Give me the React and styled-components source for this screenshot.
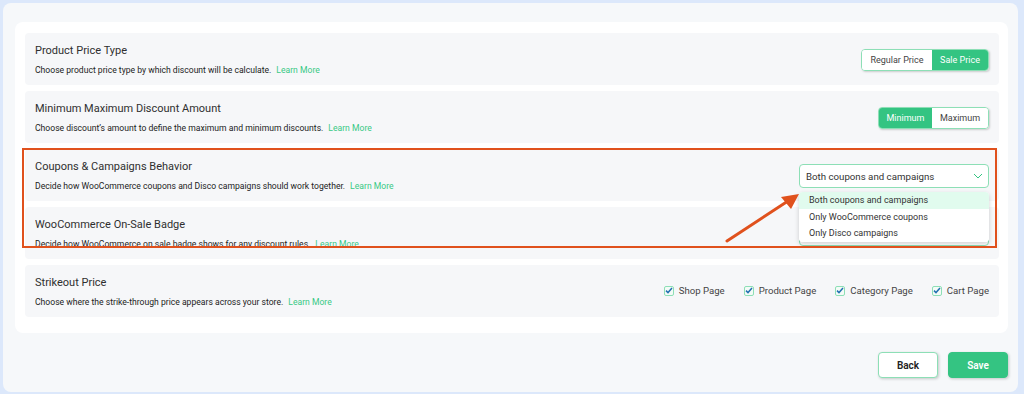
import React from "react";
import styled, { createGlobalStyle } from "styled-components";

const GREEN = "#34c482";
const SOFT_GREEN = "#8ddfb6";
const ORANGE = "#e0511d";

const GlobalStyle = createGlobalStyle`
  html, body {
    margin: 0;
    padding: 0;
    background: #dce8fb;
    font-family: Roboto, "Noto Sans", "Liberation Sans", sans-serif;
    color: #2b2b2b;
  }
  * { box-sizing: border-box; }
`;

const Page = styled.div`
  padding: 3px 6px 2px 3px;
  height: 394px;
`;

const Panel = styled.div`
  background: #f6f8fa;
  border-radius: 8px;
  height: 389px;
  padding: 19px 10px 14px 12px;
  display: flex;
  flex-direction: column;
`;

const Card = styled.div`
  background: #ffffff;
  border-radius: 8px;
  height: 311px;
  padding: 11px 9px 0 10px;
  display: flex;
  flex-direction: column;
  gap: 6px;
`;

const Row = styled.div`
  background: #f6f7f9;
  border-radius: 4px;
  height: 52px;
  padding: 11px 10px 0 10px;
  display: flex;
  justify-content: space-between;
  align-items: flex-start;
`;

const Info = styled.div`
  display: flex;
  flex-direction: column;
  gap: 6px;
  max-height: ${(p) => (p.$clip ? `${p.$clip}px` : "none")};
  overflow: hidden;
`;

const Title = styled.div`
  font-size: 11px;
  line-height: 14px;
  color: #2f2f2f;
`;

const Desc = styled.div`
  font-size: 8.6px;
  line-height: 12px;
  color: #222;
`;

const Learn = styled.a`
  color: #39c985;
  margin-left: 5px;
  cursor: pointer;
`;

const Toggle = styled.div`
  display: flex;
  margin-top: 5px;
  border: 1px solid ${SOFT_GREEN};
  border-radius: 4px;
  overflow: hidden;
  box-shadow: 1px 1px 2px rgba(0, 0, 0, 0.18);
  height: 22px;
`;

const ToggleOption = styled.div`
  display: flex;
  align-items: center;
  justify-content: center;
  width: ${(p) => p.$w}px;
  font-size: 9px;
  background: ${(p) => (p.$active ? GREEN : "#fff")};
  color: ${(p) => (p.$active ? "#fff" : "#444")};
`;

const Callout = styled.div`
  position: relative;
  display: flex;
  flex-direction: column;
  gap: 6px;
`;

const Frame = styled.div`
  position: absolute;
  top: -1px;
  left: -3px;
  right: 2px;
  height: 100px;
  border: 2px solid ${ORANGE};
  pointer-events: none;
  z-index: 3;
`;

const SelectWrap = styled.div`
  position: relative;
  margin-top: 4px;
`;

const Select = styled.div`
  width: 190px;
  height: 24px;
  border: 1px solid ${SOFT_GREEN};
  border-radius: 4px;
  background: #fff;
  display: flex;
  align-items: center;
  justify-content: space-between;
  padding: 0 5px 0 6px;
  font-size: 9.7px;
  color: #333;
`;

const Menu = styled.div`
  position: absolute;
  top: 28px;
  left: 0;
  width: 190px;
  background: #fff;
  border-radius: 4px;
  box-shadow: 0 2px 5px rgba(0, 0, 0, 0.18);
  z-index: 2;
  overflow: hidden;
`;

const MenuItem = styled.div`
  height: 16.6px;
  display: flex;
  align-items: center;
  padding-left: 10px;
  font-size: 9px;
  color: #333;
  background: ${(p) => (p.$active ? "#e1fbee" : "#fff")};
`;

const Arrow = styled.svg`
  position: absolute;
  left: 690px;
  top: 40px;
  z-index: 3;
  pointer-events: none;
`;

const Checks = styled.div`
  display: flex;
  gap: 19px;
  margin-top: 9px;
`;

const Check = styled.label`
  display: flex;
  align-items: center;
  gap: 5px;
  font-size: 9.6px;
  color: #444;
`;

const Box = styled.span`
  width: 10px;
  height: 10px;
  border: 1px solid ${SOFT_GREEN};
  border-radius: 2px;
  background: #f3fbf7;
  display: flex;
  align-items: center;
  justify-content: center;
`;

const Footer = styled.div`
  margin-top: 19px;
  display: flex;
  justify-content: flex-end;
  gap: 10px;
`;

const Button = styled.button`
  width: 60px;
  height: 26px;
  border-radius: 4px;
  font-family: inherit;
  font-size: 10px;
  font-weight: 600;
  cursor: pointer;
  border: 1px solid ${(p) => (p.$primary ? GREEN : SOFT_GREEN)};
  background: ${(p) => (p.$primary ? GREEN : "#fff")};
  color: ${(p) => (p.$primary ? "#fff" : "#222")};
  box-shadow: 1px 1px 3px rgba(0, 0, 0, 0.2);
`;

const Chevron = () => (
  <svg width="10" height="6" viewBox="0 0 10 6">
    <path d="M1 1l4 4 4-4" fill="none" stroke={GREEN} strokeWidth="1" />
  </svg>
);

const Tick = () => (
  <svg width="8" height="7" viewBox="0 0 8 7">
    <path d="M1 3.6l2 2L7 1" fill="none" stroke="#2271b1" strokeWidth="1.5" />
  </svg>
);

const pages = ["Shop Page", "Product Page", "Category Page", "Cart Page"];

const App = () => (
  <>
    <GlobalStyle />
    <Page>
      <Panel>
        <Card>
          <Row>
            <Info>
              <Title>Product Price Type</Title>
              <Desc>
                Choose product price type by which discount will be calculate.
                <Learn>Learn More</Learn>
              </Desc>
            </Info>
            <Toggle>
              <ToggleOption $w={70}>Regular Price</ToggleOption>
              <ToggleOption $w={56} $active>Sale Price</ToggleOption>
            </Toggle>
          </Row>
          <Row>
            <Info>
              <Title>Minimum Maximum Discount Amount</Title>
              <Desc>
                Choose discount’s amount to define the maximum and minimum discounts.
                <Learn>Learn More</Learn>
              </Desc>
            </Info>
            <Toggle>
              <ToggleOption $w={53} $active>Minimum</ToggleOption>
              <ToggleOption $w={56}>Maximum</ToggleOption>
            </Toggle>
          </Row>
          <Callout>
            <Row>
              <Info>
                <Title>Coupons &amp; Campaigns Behavior</Title>
                <Desc>
                  Decide how WooCommerce coupons and Disco campaigns should work together.
                  <Learn>Learn More</Learn>
                </Desc>
              </Info>
              <SelectWrap>
                <Select>
                  Both coupons and campaigns
                  <Chevron />
                </Select>
                <Menu>
                  <MenuItem $active>Both coupons and campaigns</MenuItem>
                  <MenuItem>Only WooCommerce coupons</MenuItem>
                  <MenuItem>Only Disco campaigns</MenuItem>
                </Menu>
              </SelectWrap>
            </Row>
            <Row>
              <Info $clip={29}>
                <Title>WooCommerce On-Sale Badge</Title>
                <Desc>
                  Decide how WooCommerce on sale badge shows for any discount rules.
                  <Learn>Learn More</Learn>
                </Desc>
              </Info>
              <SelectWrap>
                <Select />
              </SelectWrap>
            </Row>
            <Frame />
            <Arrow width="110" height="60" viewBox="0 0 110 60">
              <line x1="12" y1="52" x2="73" y2="12" stroke={ORANGE} strokeWidth="3" strokeLinecap="round" />
              <polygon points="84,5 66,8 76,20" fill={ORANGE} />
            </Arrow>
          </Callout>
          <Row>
            <Info>
              <Title>Strikeout Price</Title>
              <Desc>
                Choose where the strike-through price appears across your store.
                <Learn>Learn More</Learn>
              </Desc>
            </Info>
            <Checks>
              {pages.map((p) => (
                <Check key={p}>
                  <Box>
                    <Tick />
                  </Box>
                  {p}
                </Check>
              ))}
            </Checks>
          </Row>
        </Card>
        <Footer>
          <Button>Back</Button>
          <Button $primary>Save</Button>
        </Footer>
      </Panel>
    </Page>
  </>
);

export default App;
